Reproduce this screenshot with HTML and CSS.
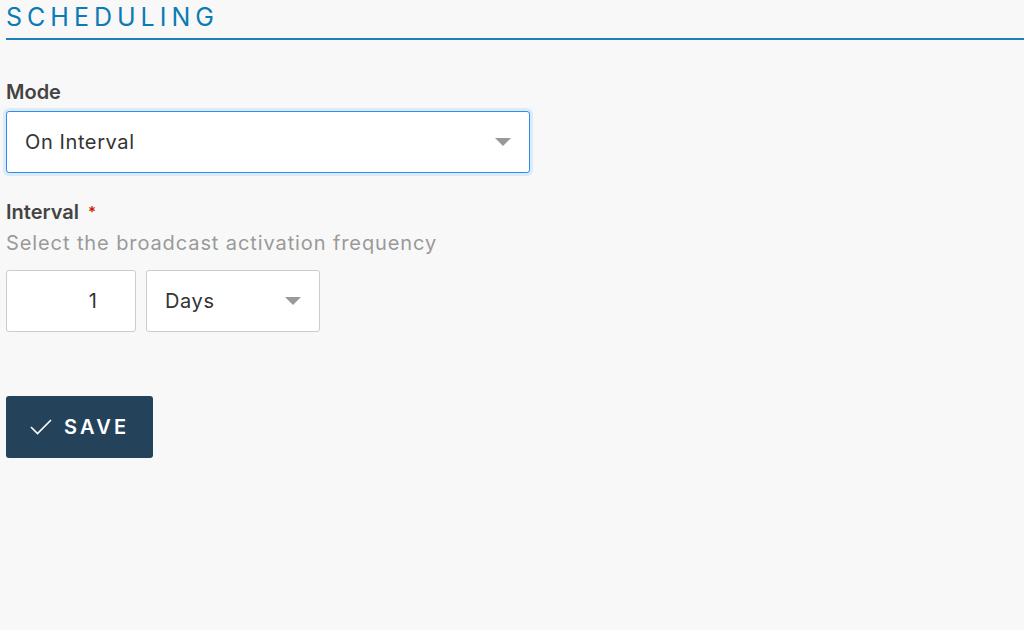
FILE: index.html
```html
<!DOCTYPE html>
<html lang="en">
<head>
  <meta charset="UTF-8" />
  <title>Scheduling</title>
  <link rel="stylesheet" href="styles.css">
</head>
<body>

  <h1 class="section-title">Scheduling</h1>

  <form class="schedule-form">
    <!-- Mode -->
    <div class="form-group">
      <label class="field-label" for="mode">Mode</label>
      <div class="select-box is-focused wide">
        <span class="select-value">On Interval</span>
        <span class="caret"></span>
      </div>
    </div>

    <!-- Interval -->
    <div class="form-group">
      <label class="field-label" for="interval">Interval <span class="required">*</span></label>
      <p class="helper">Select the broadcast activation frequency</p>
      <div class="inline-row">
        <div class="number-box" id="interval">1</div>
        <div class="select-box narrow">
          <span class="select-value">Days</span>
          <span class="caret"></span>
        </div>
      </div>
    </div>

    <button type="button" class="btn-save">
      <svg width="22" height="16" viewBox="0 0 22 16">
        <path d="M1 8 L7.5 14.5 L21 1" fill="none" stroke="#fff" stroke-width="1.6" />
      </svg>
      Save
    </button>
  </form>

</body>
</html>
```

FILE: styles.css
```css
body {
  margin: 0;
  padding: 0 0 0 6px;
  background: #f8f8f8;
  font-family: "Inter", "Open Sans", sans-serif;
  color: #4a4a4a;
}
.section-title {
  margin: 0;
  height: 40px;
  font-size: 25px;
  line-height: 34px;
  font-weight: 400;
  letter-spacing: 5px;
  text-transform: uppercase;
  color: #0b7bb5;
  border-bottom: 2px solid #1f80b8;
  box-sizing: border-box;
}
.schedule-form {
  padding-top: 40px;
}
.form-group {
  margin-bottom: 27px;
}
.field-label {
  display: block;
  font-size: 20px;
  font-weight: 600;
  color: #444;
  line-height: 24px;
  margin-bottom: 7px;
}
.required {
  color: #c92100;
  font-size: 15px;
  vertical-align: top;
  margin-left: 4px;
}
.helper {
  margin: 0 0 15px;
  font-size: 20px;
  line-height: 24px;
  letter-spacing: 0.9px;
  color: #9a9a9a;
}
.select-box {
  display: flex;
  align-items: center;
  justify-content: space-between;
  box-sizing: border-box;
  height: 62px;
  padding: 0 18px 0 18px;
  background: #fff;
  border: 1px solid #ccc;
  border-radius: 3px;
  font-size: 20px;
  letter-spacing: 0.6px;
  color: #333;
}
.select-box.wide {
  width: 524px;
}
.select-box.narrow {
  width: 174px;
}
.select-box.is-focused {
  border-color: #2b8ff0;
  box-shadow: 0 0 0 3px #dcebf8;
}
.caret {
  width: 0;
  height: 0;
  border-left: 8px solid transparent;
  border-right: 8px solid transparent;
  border-top: 8px solid #999;
}
.inline-row {
  display: flex;
  gap: 10px;
}
.number-box {
  box-sizing: border-box;
  width: 130px;
  height: 62px;
  padding-right: 38px;
  line-height: 60px;
  text-align: right;
  background: #fff;
  border: 1px solid #ccc;
  border-radius: 3px;
  font-size: 20px;
  color: #333;
}
.btn-save {
  display: flex;
  align-items: center;
  gap: 12px;
  margin-top: 64px;
  height: 62px;
  padding: 0 24px 0 24px;
  border: none;
  border-radius: 3px;
  background: #24435a;
  color: #fff;
  font-family: inherit;
  font-size: 20px;
  font-weight: 600;
  letter-spacing: 3.2px;
  text-transform: uppercase;
}
```
